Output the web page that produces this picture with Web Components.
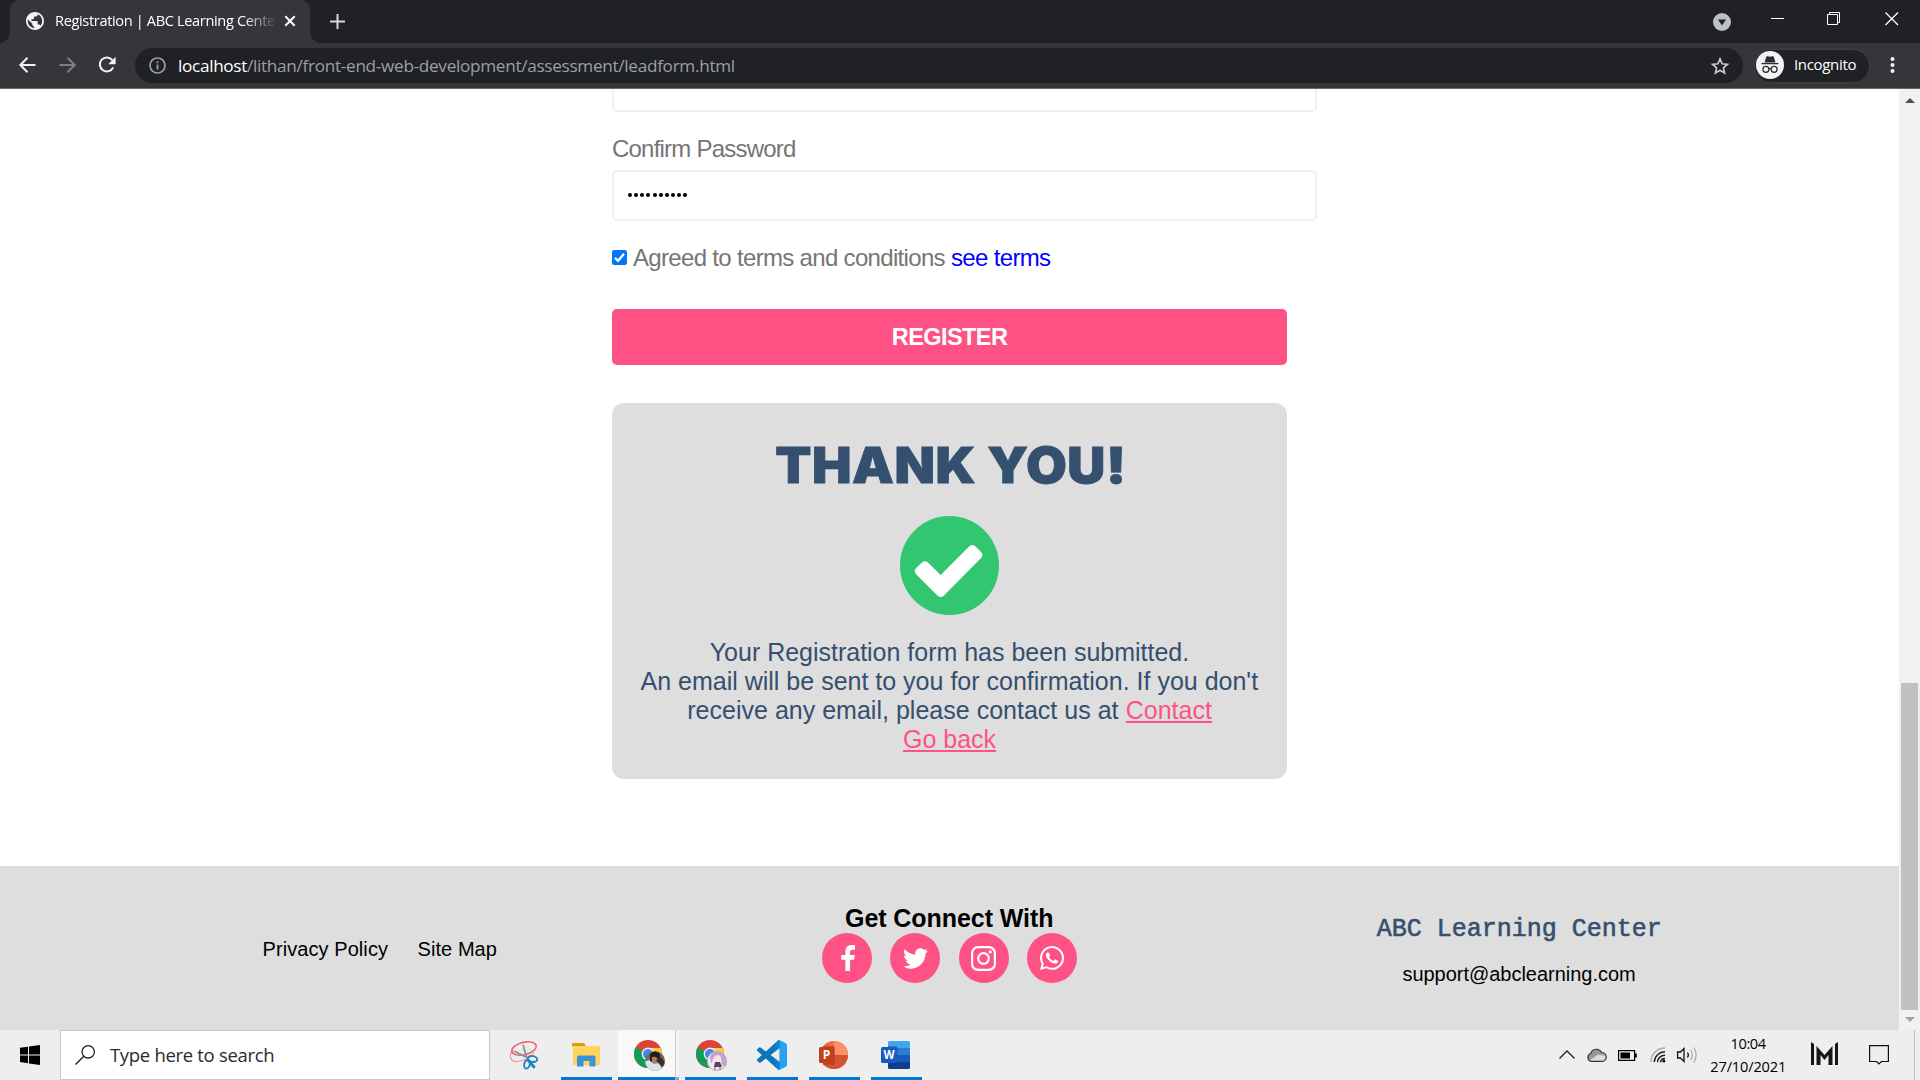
<!DOCTYPE html>
<html lang="en">
<head>
<meta charset="utf-8">
<title>Registration | ABC Learning Center</title>
<style>
html,body{margin:0;padding:0;width:1920px;height:1080px;overflow:hidden;background:#fff}
body{font-family:"Liberation Sans",Arial,sans-serif}
</style>
</head>
<body>
<desk-top></desk-top>
<script>
const UI = '"Open Sans","Noto Sans",sans-serif';
function define(name, css, html, ready) {
  const tpl = document.createElement('template');
  tpl.innerHTML = `<style>*{box-sizing:border-box}svg{display:block;flex:none;overflow:visible}${css}</style>${html}`;
  customElements.define(name, class extends HTMLElement {
    constructor() {
      super();
      this.attachShadow({ mode: 'open' }).append(tpl.content.cloneNode(true));
    }
    connectedCallback() { if (ready) ready.call(this); }
  });
}

/* A single line of text tracked to a given width. */
define('fit-text', `:host{display:inline-block;white-space:pre;flex:none}`, `<slot></slot>`, function () {
  const w = parseFloat(this.getAttribute('w'));
  if (!w) return;
  const n = [...this.textContent].length;
  const natural = this.offsetWidth;
  this.style.letterSpacing = ((w - natural) / n).toFixed(3) + 'px';
  this.style.width = w + 'px';
});

define('tab-strip', `
:host{display:flex;height:43px;background:#202124;padding-left:10px;color:#fff;font-family:${UI}}
.tab{position:relative;width:300px;height:43px;background:#35363a;border-radius:9px 9px 0 0;display:flex;align-items:center;padding:0 14px 1px 16px}
.tab::before,.tab::after{content:"";position:absolute;bottom:0;width:10px;height:10px}
.tab::before{left:-10px;background:radial-gradient(circle at 0 0,transparent 9.5px,#35363a 10px)}
.tab::after{right:-10px;background:radial-gradient(circle at 100% 0,transparent 9.5px,#35363a 10px)}
.t{margin-left:11px;width:221px;font-size:14.6px;line-height:22px;height:24px;-webkit-mask-image:linear-gradient(90deg,#000 188px,transparent 223px);mask-image:linear-gradient(90deg,#000 188px,transparent 223px)}
.x{margin-left:9px}
.plus{margin:14px 0 0 20px}
.win{margin-left:auto;display:flex;padding-top:12px}
`, `<div class="tab">
<svg width="18" height="18" viewBox="2 2 20 20"><path fill="#f1f3f4" d="M12 2C6.480 2 2 6.480 2 12s4.480 10 10 10 10-4.480 10-10S17.520 2 12 2zm-1 17.930c-3.950-.490-7-3.850-7-7.930 0-.620.080-1.210.210-1.790L9 15v1c0 1.100.900 2 2 2v1.930zm6.900-2.540c-.260-.810-1-1.390-1.900-1.390h-1v-3c0-.550-.450-1-1-1H8v-2h2c.550 0 1-.450 1-1V7h2c1.100 0 2-.900 2-2v-.410c2.930 1.190 5 4.060 5 7.410 0 2.080-.800 3.970-2.100 5.390z"/></svg>
<div class="t"><fit-text w="220">Registration | ABC Learning Cente</fit-text></div>
<svg class="x" width="12" height="12" viewBox="0 0 12 12"><path d="M1.300 1.300l9.400 9.400M10.700 1.300L1.300 10.700" stroke="#fff" stroke-width="2"/></svg>
</div>
<svg class="plus" width="15" height="15"><path d="M7.500 0v15M0 7.500h15" stroke="#d6d7d9" stroke-width="2"/></svg>
<div class="win">
<svg style="margin-right:40px;margin-top:1px" width="18" height="18"><circle cx="9" cy="9" r="9" fill="#bdc1c6"/><path d="M5 6.500h8l-4 6z" fill="#202124"/></svg>
<svg style="margin-right:43px" width="13" height="14"><path d="M0 6.500h13" stroke="#fff" stroke-width="1"/></svg>
<svg style="margin-right:44px" width="14" height="14"><path d="M.5 2.500h10v10H.5zM2.500 2.500V.5h10v10h-2" fill="none" stroke="#fff" stroke-width="1"/></svg>
<svg style="margin-right:21px" width="14" height="14"><path d="M.5.5l12.500 12.500M13 .5L.5 13" stroke="#fff" stroke-width="1.300"/></svg>
</div>`);

define('tool-bar', `
:host{display:flex;align-items:center;height:46px;background:#35363a;border-bottom:1px solid #67686b;padding:0 25px 0 19px;font-family:${UI}}
.nav{margin-right:23px}
.omni{display:flex;align-items:center;width:1608px;height:35px;border-radius:18px;background:#202124;margin-left:18px;padding:0 14px;color:#9aa0a6;font-size:17.2px;line-height:34px}
.chip{display:flex;align-items:center;width:116px;height:34px;border:1px solid #3c4043;border-radius:17px;background:#202124;margin-left:11px;color:#fff;font-size:15px;line-height:30px;padding-left:1px}
.chip fit-text{margin-left:10px;padding-bottom:3px}
.chip svg{margin-bottom:1px}
.dots{margin-left:auto;margin-bottom:1px}
.host{color:#fff;margin-left:12px}
`, `<svg class="nav" width="17" height="16" viewBox="0 0 17 16" style="margin-bottom:2px"><path d="M16.500 8H1.500M8.500.800L1.300 8l7.200 7.200" fill="none" stroke="#f1f3f4" stroke-width="2"/></svg>
<svg class="nav" width="17" height="16" viewBox="0 0 17 16" style="margin-bottom:2px"><path d="M.5 8h15M8.500.800L15.700 8l-7.200 7.200" fill="none" stroke="#7d7f82" stroke-width="2"/></svg>
<svg width="18" height="18" viewBox="0 0 18 18" style="margin:0 1px 2px -1px"><path d="M15.200 11.300A7 7 0 1 1 14.400 4.200" fill="none" stroke="#f1f3f4" stroke-width="2"/><path d="M17.600.800v7.400h-7.400z" fill="#f1f3f4"/></svg>
<div class="omni"><svg width="17" height="17" viewBox="0 0 17 17"><circle cx="8.500" cy="8.500" r="7.500" fill="none" stroke="#9aa0a6" stroke-width="1.700"/><path d="M8.500 7.500v5M8.500 4.300v1.900" stroke="#9aa0a6" stroke-width="1.800"/></svg>
<fit-text class="host" w="69">localhost</fit-text><fit-text w="488">/lithan/front-end-web-development/assessment/leadform.html</fit-text>
<svg style="margin-left:auto" width="18" height="18" viewBox="0 0 18 18"><path d="M9 1.900l2.100 4.900 5.300.5-4 3.500 1.200 5.200L9 13.200 4.400 16l1.200-5.200-4-3.500 5.300-.5z" fill="none" stroke="#c4c7c9" stroke-width="1.700"/></svg></div>
<div class="chip"><svg width="28" height="28" viewBox="0 0 28 28"><circle cx="14" cy="14" r="14" fill="#f1f3f4"/><path d="M8.500 11.500L10.200 6q.4-1 1.400-.7l2.400.5 2.400-.5q1-.3 1.400.7l1.700 5.500zM5.500 12h17v1.300h-17z" fill="#2b2c2f"/><g fill="none" stroke="#2b2c2f" stroke-width="1.300"><circle cx="9.900" cy="18.300" r="3"/><circle cx="18.100" cy="18.300" r="3"/><path d="M12.800 17.800q1.200-.8 2.400 0"/></g></svg><fit-text w="62">Incognito</fit-text></div>
<svg class="dots" width="5" height="16"><g fill="#f1f3f4"><circle cx="2.500" cy="2" r="2"/><circle cx="2.500" cy="8" r="2"/><circle cx="2.500" cy="14" r="2"/></g></svg>`);

define('text-field', `:host{display:block;width:705px;height:51px;border:2px solid #f0f0f0;border-radius:5px;background:#fff;padding:0 14px}
:host([clipped]){height:23px;border-top:0;border-radius:0 0 5px 5px}
.d{display:flex;gap:2.150px;height:47px;align-items:center;padding-bottom:1px}
i{width:4px;height:4px;border-radius:50%;background:#000}`, `<div class="d"></div>`, function () {
  const n = +this.getAttribute('length') || 0;
  this.shadowRoot.querySelector('.d').innerHTML = '<i></i>'.repeat(n);
});

define('check-row', `:host{display:flex;align-items:center;height:28px;margin-top:22px;font-size:24px;line-height:28px;color:#757575}
svg{margin-right:6px}a{color:#00f}fit-text{padding-top:1px}`,
`<svg width="15" height="15" viewBox="0 0 15 15"><rect width="15" height="15" rx="2.300" fill="#0075ff"/><path d="M3 7.900l3 3L12 3.700" fill="none" stroke="#fff" stroke-width="2.300"/></svg><fit-text w="318">Agreed to terms and conditions </fit-text><a><fit-text w="99">see terms</fit-text></a>`);

define('main-button', `:host{display:flex;width:675px;height:56px;margin-top:38px;border-radius:5px;background:#fe5285;color:#fff;align-items:center;justify-content:center;font:bold 23.500px/26px "Liberation Sans",sans-serif;padding-bottom:1px}`,
`<fit-text w="115.500">REGISTER</fit-text>`);

define('thank-card', `:host{display:flex;flex-direction:column;align-items:center;width:675px;height:376px;margin-top:38px;border-radius:12px;background:#dedede;padding-top:32px;color:#354f6e}
.h{font:900 49.500px/60px Inter,"Liberation Sans",sans-serif;-webkit-text-stroke:.8px #354f6e;transform:scaleX(1.065);margin-left:2px}
svg{margin:21px 0 23px}
.l{font-size:25px;line-height:29px;height:29px;display:flex}
a{color:#fe5285;text-decoration:underline;text-decoration-thickness:2px;text-underline-offset:2px}`,
`<fit-text class="h" w="330">THANK YOU!</fit-text>
<svg width="99" height="99" viewBox="0 0 99 99"><circle cx="49.500" cy="49.500" r="49.500" fill="#32c671"/><path d="M15.900 52.300l6-5.700q3-2.600 6 0l12.800 12.400L69.300 30.300q3-2.600 6 0l5.800 5.700q2.600 3 0 6L43.700 79.700q-3 2.600-6 0L15.900 58q-2.300-2.900 0-5.700z" fill="#fff"/></svg>
<div class="l"><fit-text w="479.500">Your Registration form has been submitted.</fit-text></div>
<div class="l"><fit-text w="618">An email will be sent to you for confirmation. If you don't</fit-text></div>
<div class="l"><fit-text w="438.500">receive any email, please contact us at </fit-text><a><fit-text w="86" style="text-decoration:inherit">Contact</fit-text></a></div>
<div class="l"><a><fit-text w="93" style="text-decoration:inherit">Go back</fit-text></a></div>`);

define('reg-form', `:host{display:block;width:705px;margin-left:612px;height:777px}
label{display:block;margin:23px 0 7px;height:28px;font-size:24px;line-height:28px;color:#757575}`,
`<text-field clipped></text-field><label><fit-text w="183.500">Confirm Password</fit-text></label><text-field length="10"></text-field><check-row></check-row><main-button></main-button><thank-card></thank-card>`);

define('social-icon', `:host{display:flex;width:50px;height:50px;border-radius:50%;background:#fe5285;align-items:center;justify-content:center}`, `<slot></slot>`);

define('site-footer', `:host{display:grid;grid-template-columns:repeat(3,569.700px);justify-content:center;height:164px;background:#dedede;font-size:20px;line-height:24px;color:#000}
.links{display:flex;justify-content:center;align-items:center;gap:30px;padding-top:1px}
.mid,.right{display:flex;flex-direction:column;align-items:center}
.mid{padding-top:37px}.right{padding-top:50px}
.h{font:bold 25px/30px "Liberation Sans",sans-serif}
.s{display:flex;gap:18.400px}
.m{font:25px/28px "Liberation Mono",monospace;-webkit-text-stroke:.6px #354f6e;color:#354f6e;margin-bottom:18px}`,
`<div class="links"><fit-text w="125">Privacy Policy</fit-text><fit-text w="79.500">Site Map</fit-text></div>
<div class="mid"><fit-text class="h" w="209">Get Connect With</fit-text><div class="s">
<social-icon><svg width="14" height="26" viewBox="0 0 14 26" style="margin:-1px 0 0 2px"><path d="M14 .2v4.500h-2.600c-1.900 0-2.300 1-2.300 2.400V10h4.700l-.6 4.700H9.100V26H4.400V14.700H.2V10h4.200V6.500C4.400 2.300 6.900 0 10.600 0c1.700 0 2.900.1 3.400.2z" fill="#fff"/></svg></social-icon>
<social-icon><svg width="25" height="25" viewBox="0 0 512 512"><path fill="#fff" d="M459.370 151.716c.325 4.548.325 9.097.325 13.645 0 138.720-105.583 298.558-298.558 298.558-59.452 0-114.680-17.219-161.137-47.106 8.447.974 16.568 1.299 25.340 1.299 49.055 0 94.213-16.568 130.274-44.832-46.132-.975-84.792-31.188-98.112-72.772 6.498.974 12.995 1.624 19.818 1.624 9.421 0 18.843-1.300 27.614-3.573-48.081-9.747-84.143-51.980-84.143-102.985v-1.299c13.969 7.797 30.214 12.670 47.431 13.319-28.264-18.843-46.781-51.005-46.781-87.391 0-19.492 5.197-37.360 14.294-52.954 51.655 63.675 129.300 105.258 216.365 109.807-1.624-7.797-2.599-15.918-2.599-24.040 0-57.828 46.782-104.934 104.934-104.934 30.213 0 57.502 12.670 76.670 33.137 23.715-4.548 46.456-13.320 66.599-25.340-7.798 24.366-24.366 44.833-46.132 57.827 21.117-2.273 41.584-8.122 60.426-16.243-14.292 20.791-32.161 39.308-52.628 54.253z"/></svg></social-icon>
<social-icon><svg width="25" height="25" viewBox="0 0 25 25"><rect x="1.100" y="1.100" width="22.800" height="22.800" rx="6" fill="none" stroke="#fff" stroke-width="2.200"/><circle cx="12.500" cy="12.500" r="5.300" fill="none" stroke="#fff" stroke-width="2.200"/><circle cx="19.200" cy="5.900" r="1.600" fill="#fff"/></svg></social-icon>
<social-icon><svg width="24" height="24" viewBox="0 32 448 448"><path fill="#fff" d="M380.900 97.100C339 55.100 283.200 32 223.900 32c-122.400 0-222 99.600-222 222 0 39.100 10.200 77.300 29.600 111L0 480l117.700-30.900c32.400 17.700 68.900 27 106.100 27h.1c122.300 0 224.100-99.600 224.100-222 0-59.300-25.200-115-67.100-157zm-157 341.600c-33.200 0-65.700-8.900-94-25.700l-6.700-4-69.800 18.300L72 359.200l-4.400-7c-18.500-29.400-28.200-63.300-28.200-98.200 0-101.700 82.800-184.500 184.600-184.500 49.300 0 95.600 19.200 130.400 54.100 34.800 34.900 56.200 81.200 56.100 130.500 0 101.800-84.900 184.600-186.600 184.600zm101.200-138.200c-5.500-2.800-32.800-16.200-37.900-18-5.100-1.900-8.800-2.800-12.500 2.800-3.700 5.600-14.300 18-17.600 21.800-3.200 3.700-6.500 4.200-12 1.400-32.600-16.300-54-29.100-75.500-66-5.700-9.800 5.700-9.100 16.300-30.300 1.800-3.700.9-6.900-.5-9.700-1.400-2.800-12.500-30.100-17.100-41.200-4.500-10.800-9.100-9.300-12.500-9.500-3.200-.2-6.900-.2-10.600-.2-3.700 0-9.700 1.400-14.800 6.900-5.100 5.600-19.400 19-19.400 46.300 0 27.300 19.900 53.700 22.600 57.400 2.800 3.700 39.100 59.700 94.800 83.800 35.200 15.200 49 16.500 66.600 13.900 10.700-1.600 32.800-13.400 37.400-26.400 4.600-13 4.600-24.100 3.200-26.400-1.300-2.500-5-3.900-10.500-6.600z"/></svg></social-icon>
</div></div>
<div class="right"><fit-text class="m" w="285">ABC Learning Center</fit-text><fit-text w="233.500">support@abclearning.com</fit-text></div>`);

define('scroll-bar', `:host{display:flex;flex-direction:column;align-items:center;width:21px;height:941px;background:#f1f1f1;padding:9px 0 8px}
.th{width:17px;height:327px;margin:580px 0 7px;background:#c1c1c1}`,
`<svg width="10" height="5"><path d="M0 5l5-5 5 5z" fill="#505050"/></svg><div class="th"></div><svg width="10" height="5"><path d="M0 0l5 5 5-5z" fill="#a3a3a3"/></svg>`);

define('web-view', `:host{display:flex;height:941px;background:#fff}.page{width:1899px}`,
`<div class="page"><reg-form></reg-form><site-footer></site-footer></div><scroll-bar></scroll-bar>`);

define('task-app', `:host{display:flex;width:51px;height:50px;align-items:center;justify-content:center;margin-right:11px;border-bottom:3px solid #0078d7}
:host([first]){margin-right:6px}
:host([active]){width:57px;background:#f8f8f8;margin-right:0}`, `<slot></slot>`);

define('chrome-icon', `:host{display:block}`, `<svg width="31" height="31" viewBox="0 0 31 31">
<circle cx="14" cy="14" r="14" fill="#db4437"/><path d="M14 14L1.900 7A14 14 0 0 0 14 28l5-9z" fill="#0f9d58"/><path d="M14 8h12.600A14 14 0 0 1 14 28l6-10z" fill="#ffcd40"/><circle cx="14" cy="14" r="6.400" fill="#f1f1f1"/><circle cx="14" cy="14" r="5" fill="#4285f4"/>
<g class="a"><clipPath id="c"><circle cx="21" cy="21" r="10"/></clipPath><g clip-path="url(#c)"><path d="M11 11h20v20H11z" fill="#6d675c"/><path d="M16 14q5-5 10 0v8H16z" fill="#241d1b"/><path d="M18 17q5-1 6 3l-1 4h-5z" fill="#a87e69"/><path d="M10 32V22l5-2 5 4 5-1 5 9z" fill="#d9e2e6"/><path d="M22 20l5-3 4 6-3 4z" fill="#3a302b"/></g></g>
<g class="b"><clipPath id="d"><circle cx="21" cy="21" r="10"/></clipPath><g clip-path="url(#d)"><path d="M11 11h20v20H11z" fill="#efe6ef"/><path d="M14 18q1-7 8-7t8 8l1 9-5-3-1-7-7-1-3 7z" fill="#c3a2d3"/><circle cx="21.500" cy="18.500" r="3.500" fill="#fae4df"/><path d="M19 22h5l2 5h-8z" fill="#554561"/><path d="M18 27h2v3h-2zM23 27h2v3h-2z" fill="#cb8fa8"/></g><circle cx="21" cy="21" r="9.600" fill="none" stroke="#aaa" stroke-width=".8"/></g></svg>`, function () {
  this.shadowRoot.querySelector(this.getAttribute('user') === 'b' ? '.a' : '.b').remove();
});

define('task-bar', `:host{display:flex;height:50px;background:#eee;font-family:${UI};color:#000}
.start{width:60px;display:flex;align-items:center;justify-content:center}
.search{width:430px;height:50px;background:#fff;border:1px solid #c9c9c9;display:flex;align-items:center;padding-left:14px;color:#2b2b2b;font-size:18.500px;line-height:46px}
.search fit-text{margin-left:15px}
.snip{width:71px;display:flex;align-items:center;padding-left:20px}
.sep{width:4px;margin-right:6px;background:#f3f3f3;border-left:1px solid #ccc;border-bottom:3px solid #66aee7;height:50px}
.tray{margin-left:auto;display:flex;align-items:center;width:361px}
.clock{width:76px;text-align:center;font-size:14.600px;line-height:23px;margin-left:12px;padding-bottom:1px}
.end{width:1px;height:50px;background:#c0c0c0;margin-left:25px}`,
`<div class="start"><svg width="20" height="20" viewBox="0 0 20 20"><path d="M0 2.800l8-1.100v7.700H0zM9 1.500L20 0v9.400H9zM0 10.400h8v7.800l-8-1.100zM9 10.400h11V20L9 18.400z"/></svg></div>
<div class="search"><svg width="20" height="20" viewBox="0 0 20 20"><circle cx="13.200" cy="6.800" r="6.200" fill="none" stroke="#222" stroke-width="1.300"/><path d="M8.800 11.200L.5 19.500" stroke="#222" stroke-width="1.500"/></svg><fit-text w="164">Type here to search</fit-text></div>
<div class="snip"><svg width="29" height="29" viewBox="0 0 29 29"><g fill="none"><path d="M2.500 10.500C-2 15 1 21 7 20.500c7-.7 14-4 17-9" stroke="#f09a9a" stroke-width="1.200"/><ellipse cx="14" cy="7.500" rx="12.500" ry="6.200" transform="rotate(-14 14 7.500)" stroke="#ee5a5f" stroke-width="1.400"/><path d="M5 12l14-7M8 13l13-5" stroke="#ddd" stroke-width="1"/><path d="M13 3.500l3.500 13M4 10l12.500 6.500" stroke="#8b9094" stroke-width="1.700"/><ellipse cx="22.500" cy="18" rx="4.800" ry="2.900" stroke="#1c86c6" stroke-width="1.900" transform="rotate(8 22.500 18)"/><ellipse cx="17" cy="23.300" rx="2.800" ry="4.300" stroke="#1c86c6" stroke-width="1.900" transform="rotate(12 17 23.300)"/><path d="M18 19l6 7" stroke="#1c86c6" stroke-width="2.800" stroke-linecap="round"/></g></svg></div>
<task-app first><svg width="28" height="24" viewBox="0 0 28 24" style="margin:2px 2px 0 0"><path d="M1 3h25.500q1.500 0 1.500 1.500v16q0 1.500-1.500 1.500h-24Q1 22 1 20.500z" fill="#ffd45e"/><path d="M.8 0h10.500q1.500 0 1.800 1.500v2H0V1q0-1 .8-1z" fill="#e09d00"/><path d="M0 3.500h13v1H0z" fill="#ffe9a0"/><path d="M5 23.500V14q0-1.500 1.500-1.500h15.500q1.500 0 1.500 1.500v9.500h-6V18h-6v5.500z" fill="#3994d6"/></svg></task-app>
<task-app active><chrome-icon user="a" style="margin:3px 0 0 5px"></chrome-icon></task-app><div class="sep"></div>
<task-app><chrome-icon user="b" style="margin:3px 0 0 1px"></chrome-icon></task-app>
<task-app><svg width="30" height="30" viewBox="0 0 24 24" style="margin:3px 1px 0 0"><defs><linearGradient id="v"><stop offset=".55" stop-color="#0877bd"/><stop offset=".75" stop-color="#1389d3"/><stop offset=".76" stop-color="#25a5f1"/></linearGradient></defs><path fill="url(#v)" d="M23.150 2.587L18.210.210a1.494 1.494 0 0 0-1.705.290l-9.460 8.630-4.120-3.128a.999.999 0 0 0-1.276.057L.327 7.261A1 1 0 0 0 .326 8.740L3.899 12 .326 15.260a1 1 0 0 0 .001 1.479L1.650 17.940a.999.999 0 0 0 1.276.057l4.120-3.128 9.460 8.630a1.492 1.492 0 0 0 1.704.290l4.942-2.377A1.500 1.500 0 0 0 24 20.060V3.939a1.500 1.500 0 0 0-.850-1.352zm-5.146 14.861L10.826 12l7.178-5.448v10.896z"/></svg></task-app>
<task-app><svg width="29" height="28" viewBox="0 0 29 28" style="margin:2px 2px 0 0"><circle cx="15" cy="14" r="14" fill="#ed6c47"/><path d="M15 0a14 14 0 0 1 14 14H15z" fill="#ff8f6b"/><path d="M1 14h28a14 14 0 0 1-28 0z" fill="#d35230"/><path d="M4 5h10q2 0 2 2v15q0 2-2 2H4z" fill="#a83e22" opacity=".6"/><rect y="6" width="15" height="16" rx="1.500" fill="#c43e1c"/><text x="7.600" y="18.200" text-anchor="middle" font-family="Open Sans,sans-serif" font-weight="700" font-size="12" fill="#fff">P</text></svg></task-app>
<task-app><svg width="29" height="28" viewBox="0 0 29 28" style="margin:2px 2px 0 0"><path d="M8.500 0h19q1.500 0 1.500 1.500V7H7V1.500Q7 0 8.500 0z" fill="#41a5ee"/><path d="M7 7h22v7H7z" fill="#2b7cd3"/><path d="M7 14h22v7H7z" fill="#185abd"/><path d="M7 21h22v5.500q0 1.500-1.500 1.500h-19Q7 28 7 26.500z" fill="#103f91"/><path d="M7 5h8q1.500 0 1.500 1.500V22q0 2-2 2H7z" fill="#0b3a86" opacity=".4"/><rect y="6" width="16" height="16" rx="1.500" fill="#185abd"/><text x="8" y="18.200" text-anchor="middle" font-family="Open Sans,sans-serif" font-weight="700" font-size="11.500" fill="#fff">W</text></svg></task-app>
<div class="tray">
<svg width="16" height="9" style="margin-top:-1px"><path d="M.5 8.500L8 1l7.500 7.500" fill="none" stroke="#222" stroke-width="1.400"/></svg>
<svg width="20" height="14" viewBox="0 0 20 14" style="margin-left:12px;margin-top:-1px"><path d="M4.500 13.300A4 4 0 0 1 3.800 5.500 5.800 5.800 0 0 1 14.600 4.500 4.500 4.500 0 0 1 16 13.300z" fill="#ddd"/><path d="M.8 9.500A4 4 0 0 1 3.800 5.500 5.800 5.800 0 0 1 14.600 4.500L19 8 11 6.500 3 12z" fill="#979797"/><path d="M4.500 13.300A4 4 0 0 1 3.800 5.500 5.800 5.800 0 0 1 14.600 4.500 4.500 4.500 0 0 1 16 13.300z" fill="none" stroke="#333" stroke-width="1.200"/></svg>
<svg width="19" height="11" style="margin-left:11px"><path d="M.6.6h16v9.800H.6z" fill="none" stroke="#000" stroke-width="1.200"/><path d="M2.500 2.500h9.500v6H2.500zM17 3.500h1.800v4H17z"/></svg>
<svg width="16" height="16" viewBox="0 0 16 16" style="margin-left:13px"><g fill="none" stroke="#222" stroke-width="1.400"><path d="M.8 15A14 14 0 0 1 15 1" stroke="#aaa"/><path d="M4.300 15A10.500 10.500 0 0 1 15 4.800"/><path d="M7.500 15A7.200 7.200 0 0 1 15 8.300"/><path d="M10.500 15.300A4.500 4.500 0 0 1 15 11.500"/></g><circle cx="13.800" cy="14" r="1.500"/></svg>
<svg width="21" height="18" viewBox="0 0 21 18" style="margin-left:11px"><g fill="none" stroke="#111" stroke-width="1.300"><path d="M.6 6h2.900L7 2.500v13L3.500 12H.6z"/><path d="M10.500 6.500q1.700 2.500 0 5"/><path d="M13.500 4q3.500 5 0 10M16.700 1.500q5 7.500 0 15" stroke="#aaa"/></g></svg>
<div class="clock"><fit-text w="35">10:04</fit-text><br><fit-text w="75.500">27/10/2021</fit-text></div>
<svg width="27" height="23" viewBox="0 0 27 23" style="margin-left:25px;margin-top:-3px"><path d="M0 0l3 2v21H0zM27 0l-3 2v21h3zM5.500 4l8 9 8-9v19h-4V13l-4 5-4-5v10h-4z" fill="#161616"/></svg>
<svg width="20" height="20" viewBox="0 0 20 20" style="margin-left:31px"><path d="M.6.600h18.800v15.900h-7L10 19l-2.400-2.500h-7z" fill="none" stroke="#111" stroke-width="1.200"/></svg>
<div class="end"></div></div>`);

define('desk-top', `:host{display:flex;flex-direction:column;width:1920px;height:1080px;overflow:hidden}`,
`<tab-strip></tab-strip><tool-bar></tool-bar><web-view></web-view><task-bar></task-bar>`);
</script>
</body>
</html>
